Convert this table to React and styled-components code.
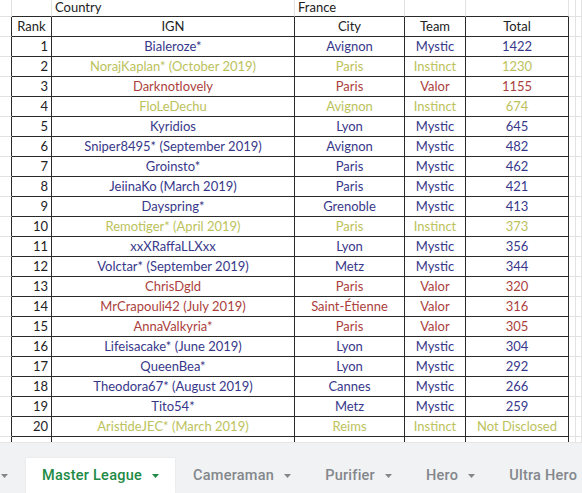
import React from 'react';
import styled, { createGlobalStyle } from 'styled-components';

const Global = createGlobalStyle`
  html, body { margin: 0; padding: 0; background: #ffffff; }
  body { width: 582px; height: 493px; overflow: hidden; }
`;

const DARK = '#2a2a2a';
const FAINT = '#e2e2e2';
const TEAM = { Mystic: '#38388a', Instinct: '#bcc25c', Valor: '#ab3f3d' };

const rows = [
  [1, 'Bialeroze*', 'Avignon', 'Mystic', '1422'],
  [2, 'NorajKaplan* (October 2019)', 'Paris', 'Instinct', '1230'],
  [3, 'Darknotlovely', 'Paris', 'Valor', '1155'],
  [4, 'FloLeDechu', 'Avignon', 'Instinct', '674'],
  [5, 'Kyridios', 'Lyon', 'Mystic', '645'],
  [6, 'Sniper8495* (September 2019)', 'Avignon', 'Mystic', '482'],
  [7, 'Groinsto*', 'Paris', 'Mystic', '462'],
  [8, 'JeiinaKo (March 2019)', 'Paris', 'Mystic', '421'],
  [9, 'Dayspring*', 'Grenoble', 'Mystic', '413'],
  [10, 'Remotiger* (April 2019)', 'Paris', 'Instinct', '373'],
  [11, 'xxXRaffaLLXxx', 'Lyon', 'Mystic', '356'],
  [12, 'Volctar* (September 2019)', 'Metz', 'Mystic', '344'],
  [13, 'ChrisDgld', 'Paris', 'Valor', '320'],
  [14, 'MrCrapouli42 (July 2019)', 'Saint-Étienne', 'Valor', '316'],
  [15, 'AnnaValkyria*', 'Paris', 'Valor', '305'],
  [16, 'Lifeisacake* (June 2019)', 'Lyon', 'Mystic', '304'],
  [17, 'QueenBea*', 'Lyon', 'Mystic', '292'],
  [18, 'Theodora67* (August 2019)', 'Cannes', 'Mystic', '266'],
  [19, 'Tito54*', 'Metz', 'Mystic', '259'],
  [20, 'AristideJEC* (March 2019)', 'Reims', 'Instinct', 'Not Disclosed'],
];

const Page = styled.div`
  display: flex;
  flex-direction: column;
  width: 582px;
  height: 493px;
  overflow: hidden;
`;

const Sheet = styled.div`
  display: grid;
  grid-template-columns: 12px 40px 243px 110px 61px 103px 5px 1fr;
  grid-template-rows: 17px repeat(21, 20px) 5px;
  font-family: Lato, 'Open Sans', sans-serif;
  font-size: 13px;
  color: #222;
`;

const Cell = styled.div`
  box-sizing: border-box;
  border-right: 1px solid ${(p) => (p.$r ? DARK : FAINT)};
  border-bottom: ${(p) => (p.$nob ? '0' : `1px solid ${p.$b ? DARK : FAINT}`)};
  display: flex;
  align-items: ${(p) => (p.$top ? 'flex-end' : 'center')};
  justify-content: ${(p) =>
    p.$align === 'right' ? 'flex-end' : p.$align === 'left' ? 'flex-start' : 'center'};
  padding: 0 3px;
  color: ${(p) => p.$color || '#222'};
  white-space: nowrap;
  overflow: hidden;
  line-height: 17px;
`;

const TabBar = styled.div`
  flex: 1;
  background: #f1f2f3;
  display: flex;
  align-items: flex-end;
  gap: 2px;
  border-top: 1px solid #e6e6e6;
  font-family: Roboto, 'Noto Sans', sans-serif;
  font-size: 14.5px;
  font-weight: 500;
  letter-spacing: 0.25px;
  overflow: hidden;
`;

const Tab = styled.div`
  flex: none;
  height: 35px;
  display: flex;
  align-items: center;
  gap: 10px;
  padding: ${(p) => (p.$edge ? '0 16px 0 1px' : '0 16px')};
  background: ${(p) => (p.$active ? '#ffffff' : 'transparent')};
  color: ${(p) => (p.$active ? '#1e8a45' : '#83878c')};
  box-shadow: ${(p) => (p.$active ? '0 0 2px rgba(0,0,0,0.08)' : 'none')};
  white-space: nowrap;
`;

const Caret = () => (
  <svg width="7" height="4" viewBox="0 0 7 4" aria-hidden="true">
    <path d="M0 0 L7 0 L3.5 4 Z" fill="currentColor" />
  </svg>
);

export default function App() {
  return (
    <>
      <Global />
      <Page>
        <Sheet>
          <Cell $top />
          <Cell $top $b />
          <Cell $top $b $align="left">Country</Cell>
          <Cell $top $b $align="left">France</Cell>
          <Cell $top $b />
          <Cell $top $b />
          <Cell $top />
          <Cell $top />

          <Cell $r />
          <Cell $r $b>Rank</Cell>
          <Cell $r $b>IGN</Cell>
          <Cell $r $b>City</Cell>
          <Cell $r $b>Team</Cell>
          <Cell $r $b>Total</Cell>
          <Cell />
          <Cell />

          {rows.map(([rank, ign, city, team, total]) => {
            const c = TEAM[team];
            return (
              <React.Fragment key={rank}>
                <Cell $r />
                <Cell $r $b $align="right">{rank}</Cell>
                <Cell $r $b $color={c}>{ign}</Cell>
                <Cell $r $b $color={c}>{city}</Cell>
                <Cell $r $b $color={c}>{team}</Cell>
                <Cell $r $b $color={c}>{total}</Cell>
                <Cell />
                <Cell />
              </React.Fragment>
            );
          })}

          <Cell $r $nob />
          <Cell $r $nob />
          <Cell $r $nob />
          <Cell $r $nob />
          <Cell $r $nob />
          <Cell $r $nob />
          <Cell $nob />
          <Cell $nob />
        </Sheet>

        <TabBar>
          <Tab $edge><Caret /></Tab>
          <Tab $active>Master League <Caret /></Tab>
          <Tab>Cameraman <Caret /></Tab>
          <Tab>Purifier <Caret /></Tab>
          <Tab>Hero <Caret /></Tab>
          <Tab>Ultra Hero</Tab>
        </TabBar>
      </Page>
    </>
  );
}
